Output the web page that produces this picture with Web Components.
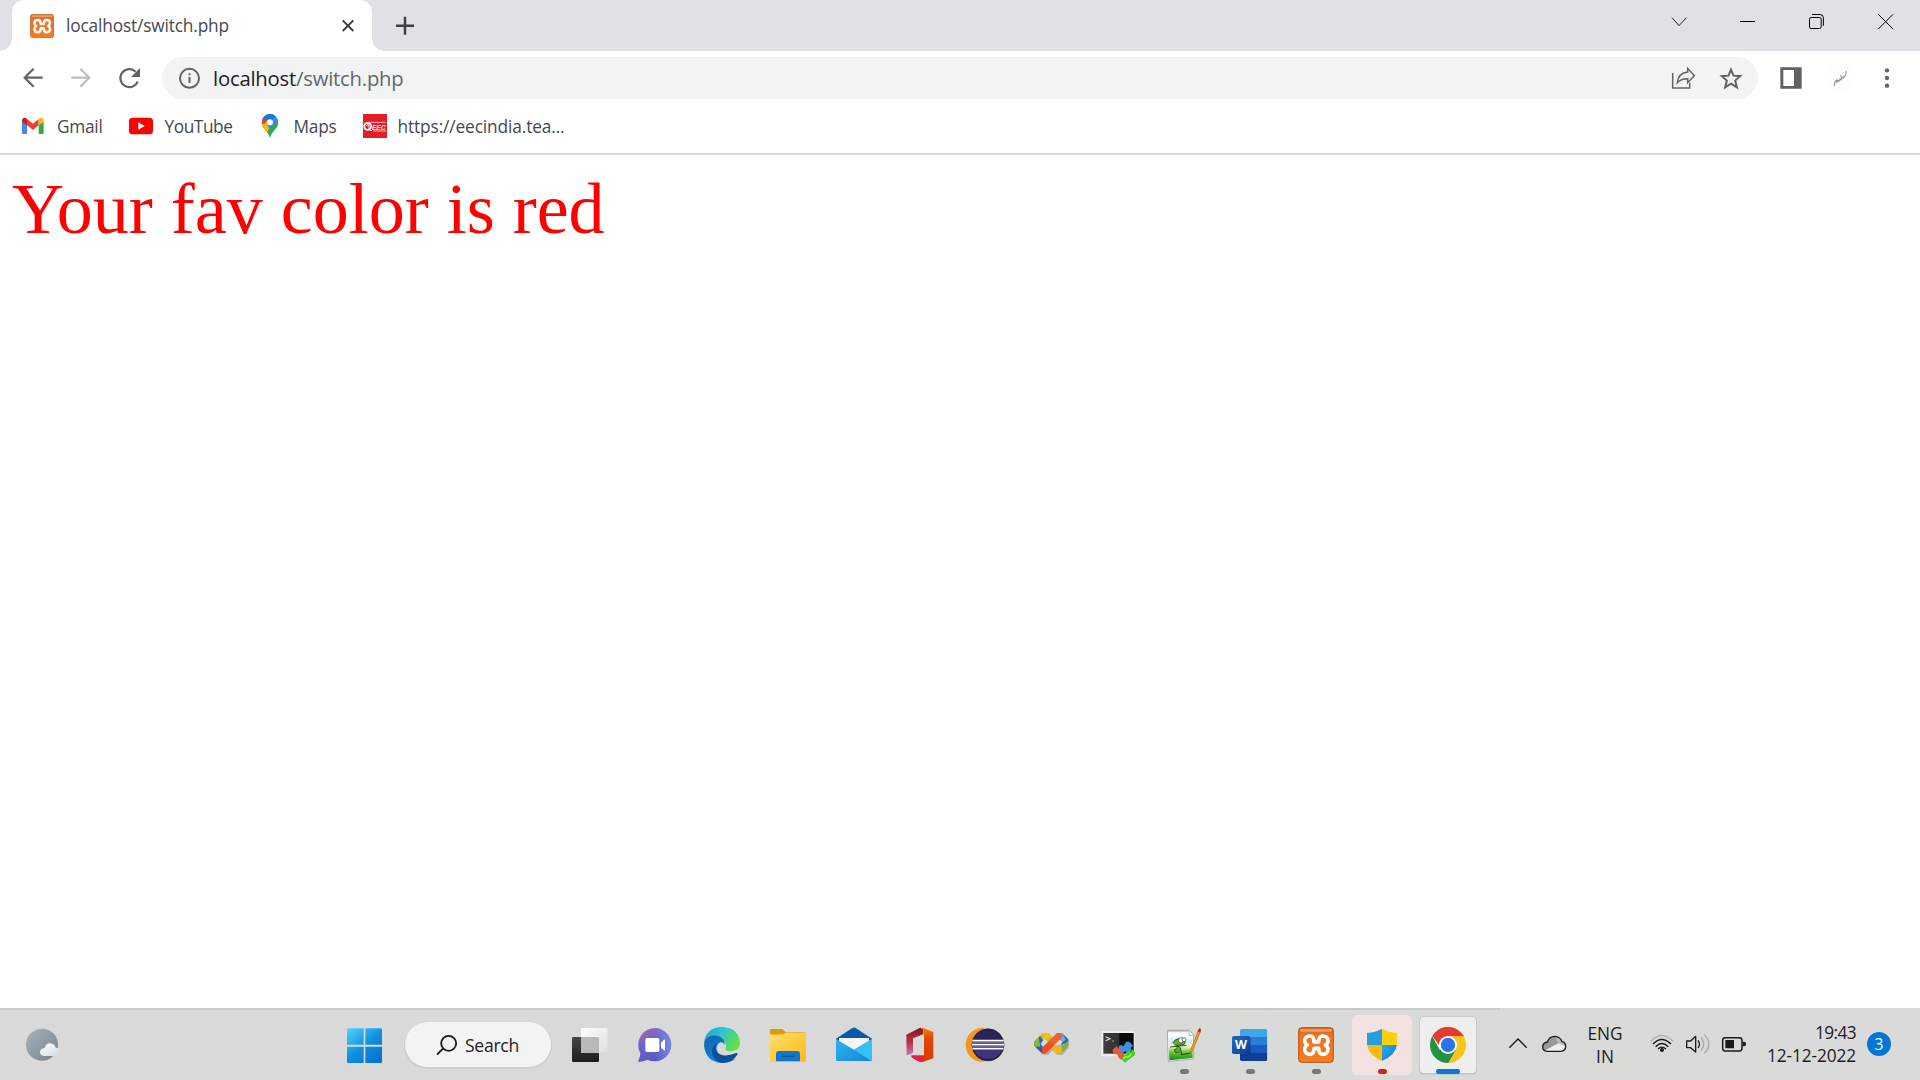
<!DOCTYPE html>
<html lang="en">
<head>
<meta charset="utf-8">
<title>localhost/switch.php</title>
<style>
html,body{margin:0;padding:0;height:100%;overflow:hidden;background:#fff}
</style>
</head>
<body>
<desktop-screen></desktop-screen>
<script>
// Each icon: viewBox in thirds of a pixel, followed by its markup.
const xampp = `<path d="M492 126h14c0-11 3-18 12-18c10 0 16 6 16 14c0 6-3 10-8 13c5 3 8 7 8 13c0 9-7 15-16 15c-9 0-12-7-12-18h-14c0 11-3 18-12 18c-10 0-16-6-16-15c0-6 3-10 8-13c-5-3-8-7-8-13c0-8 6-14 16-14c9 0 12 7 12 18z" fill="none" stroke="#fff" stroke-width="11" stroke-linejoin="round"/>`;
const xbox = `<defs><linearGradient id="a" x2="0" y2="1"><stop stop-color="#d9651f"/><stop offset=".25" stop-color="#ee7420"/><stop offset="1" stop-color="#f97a20"/></linearGradient></defs><rect x="446" y="83" width="104" height="104" rx="9" fill="url(#a)" stroke="#b9531a" stroke-width="3"/><path d="M454 87h88q4 0 4 4l-4 4h-88l-4-4q0-4 4-4" fill="#fff" opacity=".35"/>${xampp}`;
const ICONS = {
  favicon: ['90 42 72 72', `<svg x="90" y="42" width="72" height="72" viewBox="444 81 108 108">${xbox}</svg>`],
  close: ['1021 54 48 48', `<path d="M1029 61l32 32m0-32l-32 32" stroke="#3c4043" stroke-width="6"/>`],
  plus: ['1170 36 90 80', `<path d="M1188 77h54m-27-27v54" stroke="#3c4043" stroke-width="7.500"/>`],
  chevdown: ['15 0 201 153', `<path d="M96 53l21 24l22-24" fill="none" stroke="#222" stroke-width="3"/>`],
  min: ['216 0 210 153', `<path d="M300 64.5h45" stroke="#000" stroke-width="3"/>`],
  max: ['426 0 207 153', `<rect x="508.500" y="52.500" width="35" height="33" rx="5" fill="none" stroke="#000" stroke-width="3"/><path d="M516 43.500h24q10 0 10 10v24" fill="none" stroke="#000" stroke-width="3"/>`],
  wclose: ['633 0 207 153', `<path d="M715 43l44 44m0-44l-44 44" stroke="#000" stroke-width="3"/>`],
  back: ['0 153 171 162', `<path d="M128 233H74M101 206l-27 27l27 27" fill="none" stroke="#5f6368" stroke-width="6.500"/>`],
  fwd: ['171 153 147 162', `<path d="M214 233h54M241 206l27 27l-27 27" fill="none" stroke="#bcbec1" stroke-width="6.500"/>`],
  reload: ['318 153 168 162', `<path d="M413 245a27 27 0 1 1-6-30" fill="none" stroke="#5f6368" stroke-width="6.500"/><path d="M420 204v27h-27z" fill="#5f6368"/>`],
  info: ['486 171 153 126', `<circle cx="568.500" cy="235" r="28.500" fill="none" stroke="#5f6368" stroke-width="6"/><path d="M568.500 231v18M568.500 220v6" stroke="#5f6368" stroke-width="6"/>`],
  share: ['60 171 138 126', `<path d="M98 219v45h51v-16" fill="none" stroke="#5f6368" stroke-width="4.500"/><path d="M112 248c2-19 13-30 31-32v-11l20 22l-20 21v-12c-14 0-23 3-31 12z" fill="none" stroke="#5f6368" stroke-width="4.500"/>`],
  star: ['198 171 156 126', `<path d="M273 209l7.500 18l20 1.500l-15 13l5 20.500l-17.500-11l-17.500 11l5-20.500l-15-13l20-1.500z" fill="none" stroke="#5f6368" stroke-width="6"/>`],
  panel: ['354 153 171 162', `<path d="M421 202h64v64h-64zM430 210v48h32v-48z" fill="#5f6368" fill-rule="evenodd"/>`],
  sign: ['525 153 153 162', `<circle cx="600" cy="235" r="43" fill="#fdfdfd"/><path d="M583 258l2-14l5-5l-2 10M592 248l1-9l4 6l3-9l3 5l3-10l4 5l2-9l3 4M605 238l-3-13M616 229l3-17" fill="none" stroke="#808080" stroke-width="2.600"/>`],
  dots: ['678 153 162 162', `<g fill="#5f6368"><circle cx="741" cy="211" r="6.500"/><circle cx="741" cy="234" r="6.500"/><circle cx="741" cy="257" r="6.500"/></g>`],
  gmail: ['0 306 171 144', `<path d="M66 366v32q0 4 4 4h11v-38z" fill="#4285f4"/><path d="M131 366v32q0 4-4 4h-11v-38z" fill="#34a853"/><path d="M81 357l18 14l17-14v19l-17 14l-18-14z" fill="#ea4335"/><path d="M66 362q0-9 8-9q3 0 7 4v19l-15-10z" fill="#c5221f"/><path d="M131 362q0-9-8-9q-3 0-7 4v19l15-10z" fill="#fbbc04"/>`],
  youtube: ['306 306 186 144', `<rect x="384" y="353" width="72" height="50" rx="11" fill="#f00"/><path d="M412 367v22l19-11z" fill="#fff"/>`],
  maps: ['696 306 183 144', `<defs><clipPath id="m"><path d="M807 342a24.500 24.500 0 0 1 24.500 24.500c0 20-20 25-24.500 46.500c-5-21-24.500-27-24.500-46.500A24.500 24.500 0 0 1 807 342z"/></clipPath></defs><g clip-path="url(#m)"><path d="M780 340h55v75h-55z" fill="#34a853"/><path d="M780 366l12-14l24 22l-24 28l-14-10z" fill="#fbbc04"/><path d="M780 340h12l-3 10l16 14l-22 26z" fill="#4285f4"/><path d="M788 350l16 14l-13 15l-11-9v-14z" fill="#4285f4"/><path d="M780 356l8-8l15 13l-18 20h-8z" fill="#ea4335"/><path d="M780 372l10 0l16-18l14 12l-28 34l-14-12z" fill="#fbbc04"/><path d="M785 352q20-24 40-3l-18 20z" fill="#1a73e8"/><path d="M824 349l12 14l-26 30l-11-17z" fill="#4285f4"/><path d="M832 360l5 8v46h-35l-9-13z" fill="#34a853"/></g><circle cx="807" cy="367" r="9" fill="#fff"/>`],
  eec: ['1008 306 183 144', `<path d="M1086 342h72v72h-72z" fill="#e31e26"/><circle cx="1100" cy="379" r="10.500" fill="none" stroke="#fff" stroke-width="5"/><path d="M1094 378l10-6v17l9 3" fill="none" stroke="#fff" stroke-width="3"/><text x="1113" y="390" font-family="Liberation Sans" font-size="23" font-style="italic" font-weight="700" textLength="40" lengthAdjust="spacingAndGlyphs" fill="#ffe9ea">EEC</text><path d="M1103 367h51M1116 393h40" stroke="#fff" stroke-width="2"/>`],
  weather: ['0 24 300 216', `<defs><linearGradient id="w" x2="1" y2="1"><stop stop-color="#aab4bd"/><stop offset="1" stop-color="#76818b"/></linearGradient><linearGradient id="c" x2="1" y2="1"><stop stop-color="#fff"/><stop offset="1" stop-color="#cfd9e0"/></linearGradient></defs><circle cx="126" cy="134" r="48" fill="url(#w)"/><path d="M133 168q-14-2-13-13q2-9 13-10q5-16 18-15q13 1 16 13q14 0 14 12q-1 12-13 13z" fill="url(#c)"/>`],
  start: ['3 24 198 216', `<defs><linearGradient id="s" gradientUnits="userSpaceOnUse" x1="55" y1="85" x2="135" y2="190"><stop stop-color="#52d1fc"/><stop offset=".55" stop-color="#0f8ee0"/><stop offset="1" stop-color="#0074d1"/></linearGradient></defs><path d="M51 89q0-4 4-4h46v49H51zM106 85h46q4 0 4 4v45h-50zM51 140h50v49H55q-4 0-4-4zM106 140h50v45q0 4-4 4h-46z" fill="url(#s)"/>`],
  search: ['310 92 84 84', `<circle cx="357" cy="129" r="22.500" fill="none" stroke="#1a1a1a" stroke-width="5.500"/><path d="M340 145l-18 18" stroke="#1a1a1a" stroke-width="6"/>`],
  taskview: ['681 24 198 216', `<defs><linearGradient id="t" x2="0" y2="1"><stop stop-color="#464646"/><stop offset="1" stop-color="#1c1c1c"/></linearGradient><linearGradient id="u" x2="1" y2="1"><stop stop-color="#fff"/><stop offset="1" stop-color="#dedede"/></linearGradient></defs><rect x="726" y="111" width="81" height="75" rx="4" fill="url(#t)"/><path d="M757 84h71q5 0 5 5v64q0 5-5 5h-75V88q0-4 4-4" fill="url(#u)"/><path d="M753 111h50q4 0 4 4v43h-54z" fill="#b9b9b9"/>`],
  teams: ['9 24 198 216', `<defs><linearGradient id="t" x1=".1" y1="0" x2=".7" y2="1"><stop stop-color="#a06db4"/><stop offset=".45" stop-color="#6a64c4"/><stop offset="1" stop-color="#5552c4"/></linearGradient><linearGradient id="z" x1="0" x2="1"><stop offset=".5" stop-color="#7b9bf5" stop-opacity="0"/><stop offset="1" stop-color="#7b9bf5"/></linearGradient><path id="p" d="M106 84a50 50 0 1 1-24 95q-10 6-25 7q-4-1-2-5q6-9 6-22A50.500 50.500 0 0 1 106 84z"/></defs><use href="#p" fill="url(#t)"/><use href="#p" fill="url(#z)" opacity=".75"/><rect x="76" y="114" width="42" height="42" rx="5" fill="#fff"/><path d="M123 128l9-9q3-1 3 2v28q0 4-3 2l-9-8z" fill="#fff"/>`],
  edge: ['207 24 198 216', `<defs><linearGradient id="e" x2="1" y2=".5"><stop stop-color="#1b9cd8"/><stop offset=".5" stop-color="#30c6cd"/><stop offset="1" stop-color="#62df44"/></linearGradient><linearGradient id="f" x2=".4" y2="1"><stop stop-color="#0f64b5"/><stop offset="1" stop-color="#1685dc"/></linearGradient></defs><path d="M252 128q6-47 55-47q49 3 53 46q0 26-28 27q-19 0-15-10q4-13-8-22l-22-8z" fill="url(#e)"/><path d="M252 135q1-20 20-27q25-5 39 12l4 15q-8-13-19-5q-12 12-2 28q12 24 52 18q-16 13-42 13q-48-4-52-54" fill="url(#f)"/><path d="M291 128q-9 14 0 28q16 19 58 3q6-1 3 5q-14 22-44 25q-28-5-32-31q-1-20 15-30" fill="#0c4f96"/>`],
  files: ['405 24 198 216', `<defs><linearGradient id="f" x2="1" y2="1"><stop stop-color="#ffdf6b"/><stop offset="1" stop-color="#fbb914"/></linearGradient></defs><path d="M450 91q0-4 4-4h29q5 0 8 4l6 6h54q7 0 7 7H450z" fill="#dc9a0b"/><path d="M450 104h38l10-6h56q4 0 4 4v83H450z" fill="url(#f)"/><path d="M468 184v-21q0-10 10-10h52q10 0 10 10v21z" fill="#0f78cc"/><path d="M483 169h42" stroke="#0a4e94" stroke-width="4"/>`],
  mail: ['603 24 198 216', `<defs><linearGradient id="n" x2="1" y2="1"><stop stop-color="#2fb6ef"/><stop offset="1" stop-color="#1385d8"/></linearGradient></defs><path d="M648 116l49-32q5-3 10 0l49 32v25H648z" fill="#075ca9"/><path d="M657 114h90v20l-45 30l-45-30z" fill="#f4f4f4"/><path d="M648 117l54 32l54-32v62q0 4-4 4H652q-4 0-4-4z" fill="url(#n)"/><path d="M702 149l54-32v62l-3 3z" fill="#36c2ef"/>`],
  office: ['-9 24 198 216', `<defs><linearGradient id="o" x2="0" y2="1"><stop stop-color="#f28800"/><stop offset=".3" stop-color="#dd4a00"/><stop offset="1" stop-color="#d73b02"/></linearGradient><linearGradient id="r" x2="0" y2="1"><stop stop-color="#861421"/><stop offset=".5" stop-color="#bb3040"/><stop offset="1" stop-color="#ca6eb7"/></linearGradient></defs><path d="M49 104l41-21l10 2v18l-31 12v42q-1 4-19 9z" fill="url(#r)"/><path d="M90 83l11 1l29 12v79l-32 11h-6l10-14V91z" fill="url(#o)"/><path d="M64 166h38v18l-10 3q-24-10-28-16z" fill="#e1233f"/>`],
  eclipse: ['189 24 198 216', `<path d="M285 84a51 51 0 1 0 0 101a54 54 0 0 1 0-101" fill="#f7941e"/><circle cx="294" cy="134.500" r="48" fill="#2c2255" stroke="#15102f" stroke-width="2"/><path d="M252 150h84q-9 25-42 27q-31-2-42-27" fill="#41337a"/><path d="M247 122h94M246 134h96M247 146h93" stroke="#fff" stroke-width="5"/><path d="M246 128h96M246 140h96" stroke="#776da5" stroke-width="3"/>`],
  infinity: ['387 24 198 216', `<path d="M434 140l23 24h18l12-13l14 13h17l18-21l-2-10z" fill="#777" opacity=".45"/><path d="M444 113l14-13h18l20 21l-14 13l-18-17z" fill="#b5c936"/><path d="M454 100h20l10 10l-15 10z" fill="#f7bd15"/><path d="M432 126l18-18l10 12l-8 12l13 14l-9 12l-24-22z" fill="#3168b5"/><path d="M432 126l14-14l5 26l-5 10l-14-14z" fill="#7eb940"/><path d="M446 139l22 21h-11l-19-18z" fill="#2b59a8"/><path d="M501 100h16l18 18v19l-10 10l-12-14l5-8l-16-14z" fill="#2b65b1"/><path d="M500 99h17l10 20l-8 7l-16-14z" fill="#73aadb"/><path d="M484 147l14-14l9 10l13-12l15-2v8l-23 23h-14z" fill="#f9b515"/><path d="M514 139l21-16v15l-19 19z" fill="#79b83c"/><path d="M456 144l45-45h12l4 12l-49 49h-12z" fill="#ee6030"/><path d="M456 144l19-19l17 10l-24 25h-12z" fill="#e74829" opacity=".75"/>`],
  term: ['585 24 198 216', `<defs><linearGradient id="k" x2="1" y2="0"><stop stop-color="#404040"/><stop offset=".5" stop-color="#303030"/><stop offset=".55" stop-color="#090909"/></linearGradient></defs><path d="M634 93h100v76H634z" fill="#ededed"/><path d="M640 99h91v62h-91z" fill="url(#k)"/><path d="M647 110l13 6l-13 6M667 123h4" fill="none" stroke="#ddd" stroke-width="3.500"/><path d="M667 151l12-12l8 7l5-7l12 13l-6 7l8 8l-12 13l-9-8l-2-8l-11-3z" fill="#e65b36"/><path d="M686 138l8-3l6 4l9-14h9l11 12l-7 7l3 7l-11 10l-8-8l-7 7l-12-13z" fill="#3f8fe8"/><path d="M706 160l8-7l7 3l6-8l8 9v8l-30 23l-11-11l7-7z" fill="#4dcc22"/><path d="M699 176l8-6l7 2l11-10" stroke="#a6f35a" stroke-width="4" fill="none"/>`],
  npp: ['3 24 198 216', `<defs><linearGradient id="g" x2="0" y2="1"><stop offset=".1" stop-color="#fff"/><stop offset=".3" stop-color="#d7e9f5"/><stop offset=".5" stop-color="#f1f8c2"/><stop offset=".72" stop-color="#66c52c"/><stop offset="1" stop-color="#118c22"/></linearGradient></defs><path d="M52 91h67l12 14v72l-76 7z" fill="#fff" stroke="#888" stroke-width="2"/><path d="M55 97h62l11 12v65l-70 7z" fill="url(#g)"/><path d="M117 92v14h13" fill="#fff" stroke="#888" stroke-width="2"/><path d="M56 94h60" stroke="#666" stroke-width="5" stroke-dasharray="2 4"/><path d="M68 129q8-14 20-13l14 6q10 9-8 13l-14 1l12 8q-1 14-10 14q-10-1-9-9l8-3" fill="#50b81e" stroke="#1b421a" stroke-width="2.500"/><circle cx="93" cy="121" r="8" fill="#fff" stroke="#333" stroke-width="2"/><circle cx="102" cy="119" r="6" fill="#fff" stroke="#333" stroke-width="2"/><path d="M60 141l50-5M94 152v12l28-5" stroke="#222" stroke-width="2.500" fill="none"/><path d="M118 163l4-13l24-61l6 4l-25 60z" fill="#f0a51d" stroke="#98691b" stroke-width="2"/><path d="M143 94l4-9q7-2 6 5l-3 8z" fill="#a23636"/><rect x="90" y="207" width="27" height="15" rx="7.500" fill="#777"/>`],
  word: ['201 24 198 216', `<defs><clipPath id="q"><rect x="270" y="87" width="82" height="96" rx="5"/></clipPath><linearGradient id="l" x2="1" y2="1"><stop stop-color="#2368c4"/><stop offset="1" stop-color="#0e3e92"/></linearGradient></defs><g clip-path="url(#q)"><path d="M270 87h82v24h-82z" fill="#41a5ee"/><path d="M270 111h82v24h-82z" fill="#2b7cd3"/><path d="M270 135h82v24h-82z" fill="#185abd"/><path d="M270 159h82v24h-82z" fill="#103f91"/></g><path d="M270 113h33v53h-33z" fill="#08316d" opacity=".35"/><rect x="246" y="108" width="54" height="54" rx="5" fill="url(#l)"/><text x="273" y="148" text-anchor="middle" font-family="Open Sans" font-weight="700" font-size="37" fill="#fff">W</text><rect x="288" y="207" width="27" height="15" rx="7.500" fill="#777"/>`],
  xampp: ['399 24 198 216', `${xbox}<rect x="486" y="207" width="27" height="15" rx="7.500" fill="#777"/>`],
  shield: ['27 24 198 216', `<defs><clipPath id="h"><path d="M126 86q17 10 45 13v34q-3 32-45 50q-42-18-45-50V99q28-3 45-13z"/></clipPath><linearGradient id="b" x2="1" y2="1"><stop stop-color="#32aaea"/><stop offset="1" stop-color="#0a77ce"/></linearGradient></defs><rect x="36" y="45" width="180" height="180" rx="17" fill="#f2e2e2"/><g clip-path="url(#h)"><path d="M81 84h45v51H81z" fill="#249fdd"/><path d="M126 84h45v51h-45z" fill="#ffd006"/><path d="M81 135h45v50H81z" fill="#fdb80b"/><path d="M126 135h45v50h-45z" fill="url(#b)"/></g><rect x="114" y="207" width="27" height="15" rx="7.500" fill="#c42b1c"/>`],
  chrome: ['225 24 198 216', `<defs><clipPath id="i"><circle cx="324" cy="135" r="54"/></clipPath></defs><rect x="237" y="49" width="174" height="175" rx="15" fill="#c7c7c7"/><rect x="240" y="51" width="168" height="168" rx="12" fill="#eee"/><g clip-path="url(#i)"><path d="M324 135L270 60h108v48z" fill="#e33b2e"/><path d="M324 135l-25 14l-23-42L262 90v104h62l24-45z" fill="#229342"/><path d="M324 108h54l10 20v66h-66l26-45z" fill="#fcc31e"/><path d="M277 108q-5-8 2-16l45-14l54 30h-54q-24 0-27 27z" fill="#e33b2e"/></g><circle cx="324" cy="135" r="27" fill="#fff"/><circle cx="324" cy="135" r="21.500" fill="#2d73e8"/><rect x="288" y="207" width="72" height="15" rx="7.500" fill="#0a78d4"/>`],
  tray: ['-27 24 291 216', `<path d="M58 143l26-26l26 26" fill="none" stroke="#1a1a1a" stroke-width="4"/><defs><clipPath id="j"><path id="v" d="M172 154q-14-1-14-14q1-12 14-14q6-17 22-17q17 1 22 16q11 2 11 14q0 14-14 15z"/></clipPath></defs><g clip-path="url(#j)"><path d="M150 100h80v60h-80z" fill="#eee"/><path d="M150 100h80v32l-24-3l-44 24h-12z" fill="#999"/><path d="M192 108h38v32l-25-10z" fill="#bbb"/></g><use href="#v" fill="none" stroke="#1a1a1a" stroke-width="4"/>`],
  status: ['426 24 372 216', `<g fill="none"><path d="M482 124q33-34 68 0" stroke="#aaa" stroke-width="4"/><path d="M489 132q26-27 54 0M497 140q18-19 38 0M504 147q11-11 24 0" stroke="#1a1a1a" stroke-width="4"/><path d="M590 123h12l15-14v47l-15-13h-12z" stroke="#1a1a1a" stroke-width="4" stroke-linejoin="round"/><path d="M624 121q9 12 0 23" stroke="#1a1a1a" stroke-width="4"/><path d="M633 112q16 20 0 40M643 104q27 29 0 56" stroke="#aaa" stroke-width="4"/><rect x="698" y="113" width="58" height="40" rx="8" stroke="#1a1a1a" stroke-width="4.500"/></g><circle cx="516" cy="150" r="6" fill="#1a1a1a"/><path d="M706 120h26v25h-26zM758 125h5q5 0 5 7q0 7-5 7h-5z" fill="#1a1a1a"/>`]
};

class UiIcon extends HTMLElement {
  connectedCallback() {
    const [box, art] = ICONS[this.getAttribute('name')];
    const [, , w, h] = box.split(' ').map(n => n / 3);
    this.attachShadow({mode: 'open'}).innerHTML =
      `<style>:host{display:block;flex:none;width:${w}px;height:${h}px}svg.root{display:block}</style><svg class="root" width="${w}" height="${h}" viewBox="${box}">${art}</svg>`;
  }
}
customElements.define('ui-icon', UiIcon);

// A one-line label whose tracking is adjusted so that it fills the given width.
class UiLabel extends HTMLElement {
  connectedCallback() {
    this.attachShadow({mode: 'open'}).innerHTML =
      `<style>:host{display:block;flex:none;white-space:nowrap;width:${this.getAttribute('width')}px}span{display:inline-block}</style><span><slot></slot></span>`;
    const span = this.shadowRoot.querySelector('span');
    const extra = this.getAttribute('width') - span.getBoundingClientRect().width;
    span.style.letterSpacing = extra / this.textContent.length + 'px';
  }
}
customElements.define('ui-label', UiLabel);

const define = (tag, html) => {
  const t = document.createElement('template');
  t.innerHTML = html;
  customElements.define(tag, class extends HTMLElement {
    constructor() {
      super();
      this.attachShadow({mode: 'open'}).append(document.importNode(t.content, true));
    }
  });
};

define('browser-tab', `<style>
:host{display:flex;align-items:center;box-sizing:border-box;width:360px;height:51px;margin-left:12px;padding:0 16px 0 18px;background:#fff;border-radius:12px 12px 0 0;position:relative;color:#45494d;font-size:17.3px}
:host::before,:host::after{content:"";position:absolute;bottom:0;width:12px;height:12px}
:host::before{left:-12px;background:radial-gradient(circle at 0 0,transparent 11.5px,#fff 12px)}
:host::after{right:-12px;background:radial-gradient(circle at 100% 0,transparent 11.5px,#fff 12px)}
slot{display:block;margin-left:12px;flex:1}
</style><ui-icon name="favicon"></ui-icon><slot></slot><ui-icon name="close"></ui-icon>`);

define('tab-strip', `<style>
:host{display:flex;height:51px;background:#dee1e6}
.fill{flex:1}ui-icon[name=plus]{margin:12px 0 0 18px}
</style><browser-tab><ui-label width="163">localhost/switch.php</ui-label></browser-tab><ui-icon name="plus"></ui-icon><div class="fill"></div>
<ui-icon name="chevdown"></ui-icon><ui-icon name="min"></ui-icon><ui-icon name="max"></ui-icon><ui-icon name="wclose"></ui-icon>`);

define('address-bar', `<style>
:host{display:flex;align-items:center;height:42px;flex:1;border-radius:21px;background:#f1f3f4;color:#63676b;font-size:20.3px}
.url{display:flex;flex:1;line-height:28px}b{font-weight:400;color:#202124}
</style><ui-icon name="info"></ui-icon><div class="url"><b><ui-label width="83">localhost</ui-label></b><ui-label width="107.500">/switch.php</ui-label></div><ui-icon name="share"></ui-icon><ui-icon name="star"></ui-icon>`);

define('nav-bar', `<style>
:host{display:flex;align-items:center;height:54px;background:#fff}
</style><ui-icon name="back"></ui-icon><ui-icon name="fwd"></ui-icon><ui-icon name="reload"></ui-icon><address-bar></address-bar><ui-icon name="panel"></ui-icon><ui-icon name="sign"></ui-icon><ui-icon name="dots"></ui-icon>`);

define('bookmarks-bar', `<style>
:host{display:flex;align-items:center;box-sizing:border-box;height:50px;padding-bottom:6px;background:#fff;border-bottom:2px solid #dadada;color:#45494d;font-size:17.3px}
ui-icon{margin:-3px 0}
</style><ui-icon name="gmail"></ui-icon><ui-label width="45.500">Gmail</ui-label><ui-icon name="youtube"></ui-icon><ui-label width="68">YouTube</ui-label><ui-icon name="maps"></ui-icon><ui-label width="43">Maps</ui-label><ui-icon name="eec"></ui-icon><ui-label width="167">https://eecindia.tea...</ui-label>`);

define('web-page', `<style>
:host{display:block;flex:1;background:#fff;padding:13px 12px 0;font:72px/83px "Liberation Serif",serif;color:#f00}
</style><slot></slot>`);

define('search-pill', `<style>
:host{display:flex;align-items:center;flex:none;box-sizing:border-box;width:146px;height:45px;margin:1px 6px 0 8px;padding-left:28px;border-radius:23px;background:#f3f3f3;box-shadow:0 1px 0 1px #cdcdcd;font-size:17.600px;color:#222}
ui-label{margin-left:4px;margin-top:1px}
</style><ui-icon name="search"></ui-icon><ui-label width="54">Search</ui-label>`);

define('system-tray', `<style>
:host{display:flex;align-items:center;height:72px;font-size:17.300px;line-height:23px;color:#1c1c1c}
.lang{width:54px;display:flex;flex-direction:column;align-items:center;padding-top:1px}
.clock{width:100px;display:flex;flex-direction:column;align-items:flex-end}
.count{width:24px;height:24px;margin:0 0 0 11px;border-radius:50%;background:#0078d7;color:#fff;text-align:center;font-size:15.500px;line-height:24px}
</style><ui-icon name="tray"></ui-icon><div class="lang"><ui-label width="35">ENG</ui-label><ui-label width="18">IN</ui-label></div><ui-icon name="status"></ui-icon><div class="clock"><ui-label width="41">19:43</ui-label><ui-label width="89">12-12-2022</ui-label></div><div class="count">3</div>`);

define('task-bar', `<style>
:host{display:flex;align-items:center;height:72px;background:linear-gradient(90deg,#c9c9c9 1500px,transparent 1500px) 0 0/100% 2px no-repeat,linear-gradient(90deg,#d9d9d9,#d9d9d9 1100px,#d8dcd7 1320px,#d9d9d9 1480px,#d9dad8 1650px,#dadada)}
.left{width:331px}
</style><div class="left"><ui-icon name="weather"></ui-icon></div><ui-icon name="start"></ui-icon><search-pill></search-pill>
${['taskview','teams','edge','files','mail','office','eclipse','infinity','term','npp','word','xampp','shield','chrome'].map(n => `<ui-icon name="${n}"></ui-icon>`).join('')}<system-tray></system-tray>`);

define('desktop-screen', `<style>
:host{display:flex;flex-direction:column;width:1920px;height:1080px;overflow:hidden;font-family:"Open Sans","Noto Sans",sans-serif;background:#fff}
</style><tab-strip></tab-strip><nav-bar></nav-bar><bookmarks-bar></bookmarks-bar><web-page>Your fav color is red</web-page><task-bar></task-bar>`);
</script>
</body>
</html>
